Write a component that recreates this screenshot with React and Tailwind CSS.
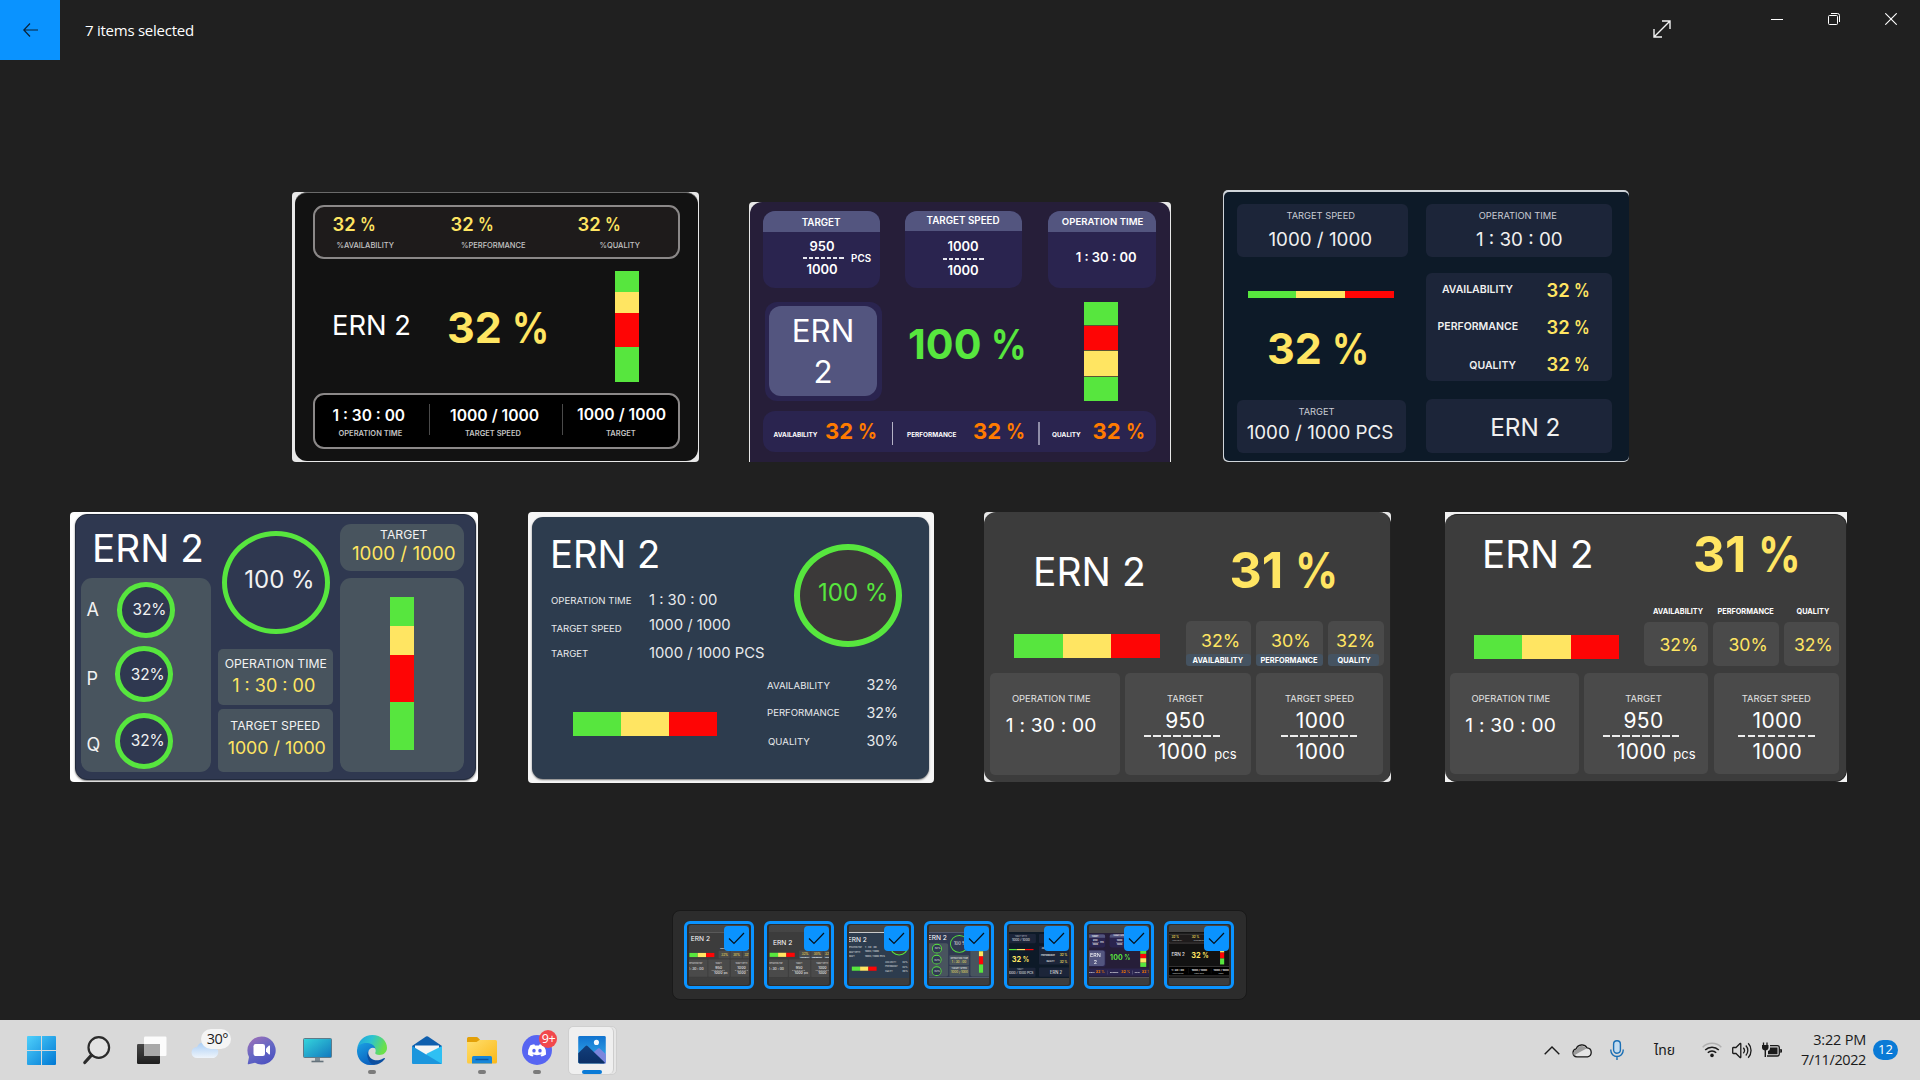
import React from "react";

/* ---------- shared pieces ---------- */

function Bar({ vertical, segments, className }) {
  return (
    <div className={(vertical ? "flex flex-col " : "flex ") + "shrink-0 " + className}>
      {segments.map((s, i) => (
        <div key={i} className={s} />
      ))}
    </div>
  );
}

const GYR = ["flex-1 bg-[#57e63e]", "flex-1 bg-[#ffe562]", "flex-1 bg-[#fe0505]"];

function Dashes({ count, className, dash }) {
  return (
    <div className={"flex justify-between " + className}>
      {Array.from({ length: count }, (_, i) => (
        <span key={i} className={dash} />
      ))}
    </div>
  );
}

/* Bold reading with a slightly condensed percent sign */
function Pct({ value }) {
  return (
    <>
      {value} <span className="inline-block origin-left scale-x-[0.85]">%</span>
    </>
  );
}

/* ---------- dashboards ---------- */

function BlackCard() {
  const top = [
    ["32", "%AVAILABILITY", "w-[118px]", "pl-[4px] leading-[14px]"],
    ["32", "%PERFORMANCE", "w-[127px]", "pl-[10.5px] leading-[13px]"],
    ["32", "%QUALITY", "", "pl-[22px] leading-[13px]"],
  ];
  return (
    <div className="h-[270px] w-[407px] shrink-0 rounded-[4px] bg-[#e8e8e8] pb-px pl-[2.5px] pr-px font-[Inter] whitespace-nowrap text-white">
      <div className="flex h-full flex-col rounded-[12px] border-t border-[#6a6a6a] bg-[#121212] pl-[18.5px] pt-[12px]">
        <div className="flex h-[54px] w-[367px] rounded-[11px] border-2 border-[#8b8888] bg-[#1e1b1b] pl-[17.5px] pt-[3px]">
          {top.map(([v, l, w, lc], i) => (
            <div key={i} className={w}>
              <p className="text-[18.4px] font-semibold leading-[28px] text-[#ffe562]"><Pct value={v} /></p>
              <p className={"pt-px text-[7.5px] font-medium text-[#c4c4c4] " + lc}>{l}</p>
            </div>
          ))}
        </div>
        <div className="flex h-[133.5px] w-[367px] items-center pl-[19px] pt-[2px]">
          <p className="w-[115px] text-[27.3px] font-normal">ERN 2</p>
          <p className="w-[167.5px] text-[43px] font-bold text-[#ffe562]"><Pct value="32" /></p>
          <Bar
            vertical
            className="w-[24.5px]"
            segments={["h-[21px] bg-[#57e63e]", "h-[21px] bg-[#ffe562]", "h-[34px] bg-[#fe0505]", "h-[35px] bg-[#57e63e]"]}
          />
        </div>
        <div className="flex h-[56px] w-[367px] rounded-[11px] border-2 border-[#8b8888] bg-black pl-[17.5px] pt-[9.5px]">
          <div className="w-[96px] text-[15.5px] font-semibold leading-[23px]">
            <p>1 : 30 : 00</p>
            <p className="pl-[6px] text-[7.5px] font-semibold leading-[13px] text-[#c4c4c4]">OPERATION TIME</p>
          </div>
          <div className="h-[31px] w-px bg-[#4a4a4a]" />
          <div className="w-[132px] pl-[20.5px] text-[15.7px] font-semibold leading-[23px]">
            <p>1000 / 1000</p>
            <p className="pl-[15px] text-[7.5px] font-semibold leading-[13px] text-[#c4c4c4]">TARGET SPEED</p>
          </div>
          <div className="h-[31px] w-px bg-[#4a4a4a]" />
          <div className="pl-[14.5px] text-[15.7px] font-semibold leading-[22px]">
            <p>1000 / 1000</p>
            <p className="pl-[29px] text-[7.5px] font-semibold leading-[16px] text-[#c4c4c4]">TARGET</p>
          </div>
        </div>
      </div>
    </div>
  );
}

function PurpleCard() {
  return (
    <div className="h-[260px] w-[422px] shrink-0 rounded-t-[4px] bg-[#e8e8e8] pl-px pr-[1.5px] font-[Inter] whitespace-nowrap text-white">
      <div className="flex h-full flex-col rounded-t-[12px] bg-[#261e39] pl-[12.6px] pt-[8.5px]">
        <div className="flex text-[13px] font-semibold">
          <div className="mr-[25px] h-[77px] w-[117px] overflow-hidden rounded-[12px] bg-[#2a244f] text-center">
            <p className="h-[21px] bg-[#53557f] text-[9.8px] leading-[23px]">TARGET</p>
            <div className="flex items-center pt-[3px]">
              <div className="ml-[40px] w-[41px]">
                <p className="-ml-[2px] leading-[22px]">950</p>
                <Dashes count={7} className="w-[41px]" dash="h-[2px] w-[4.4px] bg-[#e6e6ee]" />
                <p className="-ml-[2px] leading-[21px]">1000</p>
              </div>
              <p className="ml-[7.5px] pt-[4px] text-[9.8px]">PCS</p>
            </div>
          </div>
          <div className="mr-[26px] h-[77px] w-[117px] overflow-hidden rounded-[12px] bg-[#2a244f] text-center">
            <p className="h-[20.5px] bg-[#53557f] text-[9.8px] leading-[20.5px]">TARGET SPEED</p>
            <div className="flex flex-col items-center pt-[4px]">
              <p className="leading-[23px]">1000</p>
              <Dashes count={7} className="w-[41px]" dash="h-[2px] w-[4.4px] bg-[#e6e6ee]" />
              <p className="leading-[21px]">1000</p>
            </div>
          </div>
          <div className="h-[77px] w-[108px] overflow-hidden rounded-[12px] bg-[#2a244f] text-center">
            <p className="h-[21px] bg-[#53557f] pl-[2px] text-[9.6px] leading-[21.5px]">OPERATION TIME</p>
            <p className="pl-[9px] leading-[51px]">1 : 30 : 00</p>
          </div>
        </div>
        <div className="mt-[14px] flex h-[99px] pl-[2px]">
          <div className="h-[99px] w-[117px] rounded-[12px] bg-[#2a244f] p-[4.2px]">
            <div className="h-full rounded-[12px] bg-[#53557f] pt-[5px] text-center text-[31.3px] font-normal leading-[41.5px]">
              <p>ERN</p>
              <p>2</p>
            </div>
          </div>
          <p className="w-[202.5px] pl-[26.5px] text-[41.2px] font-bold leading-[85px] text-[#57e63e]"><Pct value="100" /></p>
          <Bar
            vertical
            className="w-[33.5px] gap-[1px] bg-[#5d5432]"
            segments={["h-[23px] bg-[#57e63e]", "h-[24.5px] bg-[#fe0505]", "h-[24.5px] bg-[#ffe562]", "h-[24px] bg-[#57e63e]"]}
          />
        </div>
        <div className="mt-[10px] flex h-[41px] w-[393px] rounded-[12px] bg-[#2a244f] pl-[11px] font-bold">
          <p className="w-[51.5px] text-[6.4px] leading-[49px]">AVAILABILITY</p>
          <p className="w-[67px] text-[22px] leading-[40px] text-[#ff7b00]"><Pct value="32" /></p>
          <div className="mt-[11px] h-[23px] w-px bg-[#b5b3c6]" />
          <p className="w-[80px] pl-[14px] text-[6.4px] leading-[49px]">PERFORMANCE</p>
          <p className="w-[65px] text-[22px] leading-[40px] text-[#ff7b00]"><Pct value="32" /></p>
          <div className="mt-[11px] h-[23px] w-[1.5px] bg-[#8f8da8]" />
          <p className="w-[53px] pl-[12.5px] text-[6.4px] leading-[49px]">QUALITY</p>
          <p className="text-[22px] leading-[40px] text-[#ff7b00]"><Pct value="32" /></p>
        </div>
      </div>
    </div>
  );
}

function NavyCard() {
  const tile = "rounded-[6px] bg-[#1c2539] text-center";
  return (
    <div className="h-[272px] w-[406px] shrink-0 rounded-[5px] bg-[#d0d5da] pb-px pl-[0.5px] pt-[1.5px] font-[Inter] whitespace-nowrap text-[#f0f0f0]">
      <div className="flex h-full rounded-[5px] bg-[#0d1a28] pl-[13.5px] pt-[12.5px]">
        <div className="mr-[18.5px] flex w-[170.5px] flex-col">
          <div className={"h-[53px] pt-[4px] " + tile}>
            <p className="pr-[3px] text-[9.3px] leading-[16px] text-[#c9ccd3]">TARGET SPEED</p>
            <p className="pr-[4px] text-[18.8px] font-normal leading-[32px]">1000 / 1000</p>
          </div>
          <Bar className="ml-[10.5px] mt-[33.5px] h-[7.5px] w-[146px]" segments={GYR} />
          <p className="pl-[30px] text-[43px] font-bold leading-[101.5px] text-[#ffe562]"><Pct value="32" /></p>
          <div className={"h-[53px] w-[169px] pt-[4px] " + tile}>
            <p className="pr-[10px] text-[9.3px] leading-[16px] text-[#c9ccd3]">TARGET</p>
            <p className="pr-[3px] text-[18.8px] font-normal leading-[25px]">1000 / 1000 PCS</p>
          </div>
        </div>
        <div className="flex w-[185.5px] flex-col">
          <div className={"h-[53px] pt-[4px] " + tile}>
            <p className="pr-[2px] text-[9.3px] leading-[16px] text-[#c9ccd3]">OPERATION TIME</p>
            <p className="pl-[1px] text-[18.8px] font-normal leading-[31px]">1 : 30 : 00</p>
          </div>
          <div className="mt-[16px] flex h-[107.5px] rounded-[6px] bg-[#1c2539]">
            <div className="w-[92px] text-right text-[10.5px] font-semibold">
              <p className="pr-[5px] leading-[33px]">AVAILABILITY</p>
              <p className="leading-[42px]">PERFORMANCE</p>
              <p className="pr-[2px] leading-[36px]">QUALITY</p>
            </div>
            <div className="-mt-px pl-[28.5px] text-[18.4px] font-semibold leading-[37px] text-[#ffe562]">
              <p><Pct value="32" /></p>
              <p><Pct value="32" /></p>
              <p><Pct value="32" /></p>
            </div>
          </div>
          <div className={"mt-[18.5px] h-[53.5px] pl-[13px] text-[24.3px] font-normal leading-[57px] " + tile}>ERN 2</div>
        </div>
      </div>
    </div>
  );
}

function SlateCard() {
  const panel = "rounded-[11px] bg-[#48545e]";
  const rings = [
    ["A", "", "w-[30px]", "pl-[7.5px] leading-[46px]", "leading-[55px]"],
    ["P", "mt-[8px]", "w-[28.5px]", "pl-[7px] leading-[48px]", "leading-[66px]"],
    ["Q", "mt-[10.5px]", "w-[28.5px]", "pl-[7px] leading-[45px]", "leading-[63px]"],
  ];
  return (
    <div className="h-[270px] w-[408px] shrink-0 rounded-[4px] bg-white pl-[5px] pt-[1.5px] font-[Inter] whitespace-nowrap text-[#f2f2f2]">
      <div className="flex h-[266px] w-[400.5px] rounded-[12px] border border-[#222a3c] bg-[#2f3850] pl-[5px] shadow-[0_1px_2px_#777]">
        <div className="w-[136.5px]">
          <p className="h-[63.5px] pl-[11px] text-[38.7px] font-normal leading-[66px] text-white">ERN 2</p>
          <div className={"h-[193.5px] w-[130px] pt-[4px] " + panel}>
            {rings.map(([l, mt, w, tc, lc], i) => (
              <div key={i} className={"flex h-[56px] pl-[5.5px] text-[18px] font-normal " + mt}>
                <span className={w + " " + lc}>{l}</span>
                <div className="h-[56px] w-[58.3px] rounded-[50%] border-[5px] border-[#57e63e] bg-[#2f3850]">
                  <p className={"text-center text-[15.4px] " + tc}>32%</p>
                </div>
              </div>
            ))}
          </div>
        </div>
        <div className="mr-[7px] w-[115.5px] pt-[16px] text-center">
          <div className="ml-[4px] h-[103.5px] w-[108px] rounded-[50%] border-[5px] border-[#57e63e] pl-[8px] text-[24px] font-normal leading-[88px]">
            100 %
          </div>
          <div className="mt-[15px] h-[56px] rounded-[5px] bg-[#48545e] pt-[4px]">
            <p className="pl-[1px] text-[12.2px] font-normal leading-[21px]">OPERATION TIME</p>
            <p className="pr-[3px] text-[18px] font-normal leading-[23px] text-[#ffe562]">1 : 30 : 00</p>
          </div>
          <div className="mt-[4px] h-[63px] rounded-[5px] bg-[#48545e] pt-[6px]">
            <p className="text-[12.2px] font-normal leading-[21px]">TARGET SPEED</p>
            <p className="pl-[3px] text-[17.8px] font-normal leading-[23px] text-[#ffe562]">1000 / 1000</p>
          </div>
        </div>
        <div className="w-[123.5px] pt-[9.5px]">
          <div className={"h-[46.5px] pl-[4px] pt-[2px] text-center " + panel}>
            <p className="text-[12.2px] font-normal leading-[18px]">TARGET</p>
            <p className="text-[18.8px] font-normal leading-[19px] text-[#ffe562]">1000 / 1000</p>
          </div>
          <div className={"mt-[7.5px] flex h-[193.5px] items-start pl-[50px] pt-[19px] " + panel}>
            <Bar
              vertical
              className="w-[24px]"
              segments={["h-[29px] bg-[#57e63e]", "h-[29px] bg-[#ffe562]", "h-[47.3px] bg-[#fe0505]", "h-[48px] bg-[#57e63e]"]}
            />
          </div>
        </div>
      </div>
    </div>
  );
}

function BlueCard() {
  return (
    <div className="h-[271px] w-[406px] shrink-0 rounded-[4px] bg-[#f6f6f6] pl-[3.5px] pt-[5px] font-[Inter] whitespace-nowrap text-[#e8eaec]">
      <div className="flex h-[262px] w-[397.5px] flex-col rounded-[11px] bg-[#2d3c4e] pl-[19.5px] shadow-[0_1px_2px_#777]">
        <div className="flex h-[153px]">
          <div className="w-[243px]">
            <p className="-ml-px h-[74px] text-[38.2px] font-normal leading-[75.5px] text-white">ERN 2</p>
            <div className="grid grid-cols-[98px_1fr] items-start text-[14.8px] font-normal">
              <p className="text-[9.6px] leading-[19px]">OPERATION TIME</p>
              <p className="leading-[19px]">1 : 30 : 00</p>
              <p className="h-[31px] text-[9.6px] leading-[37px]">TARGET SPEED</p>
              <p className="leading-[31px]">1000 / 1000</p>
              <p className="text-[9.6px] leading-[25px]">TARGET</p>
              <p className="leading-[25px]">1000 / 1000 PCS</p>
            </div>
          </div>
          <div className="mt-[27px] h-[102.5px] w-[107.5px] rounded-[50%] border-[6px] border-[#57e63e] bg-[#3b3939] pl-[18px] text-[24px] font-normal leading-[86px] text-[#57e63e]">
            100 %
          </div>
        </div>
        <div className="flex">
          <Bar className="ml-[22px] mt-[42px] h-[24px] w-[144px]" segments={GYR} />
          <div className="ml-[50px] grid grid-cols-[99.5px_1fr] items-start text-[14.3px] font-normal">
            <p className="text-[9.6px] leading-[31px]">AVAILABILITY</p>
            <p className="leading-[30px]">32%</p>
            <p className="text-[9.6px] leading-[23px]">PERFORMANCE</p>
            <p className="leading-[24px]">32%</p>
            <p className="pl-px text-[9.6px] leading-[33px]">QUALITY</p>
            <p className="leading-[32px]">30%</p>
          </div>
        </div>
      </div>
    </div>
  );
}

/* Lower row shared by the two graphite dashboards */
function GraphiteFooter({ cols, height }) {
  const tile = "rounded-[5px] bg-[#4a4a4a] pt-[17px] " + height;
  const label = "text-[9.4px] font-normal leading-[17px] tracking-normal text-[#e2e2e2]";
  return (
    <div className={"grid text-[21px] font-normal tracking-[0.25px] " + cols}>
      <div className={tile}>
        <p className={"pr-[7px] text-center " + label}>OPERATION TIME</p>
        <p className="pr-[7px] text-center text-[19.2px] leading-[37px] tracking-[0.2px]">1 : 30 : 00</p>
      </div>
      <div className={tile}>
        <div className="w-full pr-[5px] text-center">
          <p className={label}>TARGET</p>
          <p className="leading-[28.5px]">950</p>
        </div>
        <Dashes count={8} className="ml-[18.5px] w-[77px]" dash="h-[2px] w-[7.2px] bg-[#ececec]" />
        <p className="pl-[33px] leading-[30.5px]">
          1000<span className="pl-[7px] text-[13px] tracking-normal">pcs</span>
        </p>
      </div>
      <div className={tile}>
        <p className={"text-center " + label}>TARGET SPEED</p>
        <p className="pl-[2px] text-center leading-[28.5px]">1000</p>
        <Dashes count={8} className="ml-[24.5px] w-[77px]" dash="h-[2px] w-[7.2px] bg-[#ececec]" />
        <p className="pl-[2px] text-center leading-[30.5px]">1000</p>
      </div>
    </div>
  );
}

function GraphiteTagCard() {
  const tags = [
    ["32%", "AVAILABILITY", "w-[65px]", "w-full", "pl-[7px]"],
    ["30%", "PERFORMANCE", "w-[67px]", "w-full", "pl-[5px]"],
    ["32%", "QUALITY", "w-[56px]", "w-[51px]", "pl-[10px]"],
  ];
  return (
    <div className="h-[270px] w-[407px] shrink-0 rounded-[4px] bg-[#e8e8e8] pr-[0.5px] font-[Inter] whitespace-nowrap text-white">
      <div className="flex h-full flex-col rounded-[12px] border-r border-[#222] bg-[#3c3c3c] pl-[6px]">
        <div className="flex h-[109px] leading-[120px]">
          <p className="w-[239.5px] pl-[43px] text-[39px] font-normal">ERN 2</p>
          <p className="text-[50px] font-bold leading-[117px] text-[#ffe562]"><Pct value="31" /></p>
        </div>
        <div className="flex h-[51.5px]">
          <Bar className="ml-[24px] mr-[25.5px] mt-[13px] h-[24px] w-[146px]" segments={GYR} />
          {tags.map(([v, l, w, lw, pl], i) => (
            <div key={i} className={"mr-[5px] flex h-[44.5px] flex-col justify-between rounded-[5px] bg-[#4a4a4a] " + w}>
              <p className={"h-[33px] text-[17.8px] font-normal leading-[39.5px] text-[#ffe562] " + (i === 2 ? "pl-[8.5px]" : "pl-[15.5px]")}>{v}</p>
              <p className={"h-[11.5px] shrink-0 rounded-[3px] bg-[#455361] text-[7.4px] font-bold leading-[13px] " + lw + " " + pl}>{l}</p>
            </div>
          ))}
        </div>
        <GraphiteFooter height="h-[102px]" cols="grid-cols-[129.5px_125.5px_127px] gap-x-[5.5px]" />
      </div>
    </div>
  );
}

function GraphiteCard() {
  const tags = [
    ["32%", "AVAILABILITY", "w-[64px]", "pl-[9px]", "pl-[15.5px]"],
    ["30%", "PERFORMANCE", "w-[66px]", "pl-[4.5px]", "pl-[15.5px]"],
    ["32%", "QUALITY", "w-[55px]", "pl-[12.5px]", "pl-[10px]"],
  ];
  return (
    <div className="h-[270px] w-[402px] shrink-0 bg-[#f2f2f2] pb-[0.5px] pr-[0.5px] pt-[2px] font-[Inter] whitespace-nowrap text-white">
      <div className="flex h-full flex-col rounded-[12px] border border-l-0 border-[#222] bg-[#3c3c3c] pl-[5px]">
        <div className="flex h-[88px] leading-[78.5px]">
          <p className="w-[243px] pl-[32px] text-[38.6px] font-normal">ERN 2</p>
          <p className="text-[49.5px] font-bold text-[#ffe562]"><Pct value="31" /></p>
        </div>
        <div className="flex h-[69.5px]">
          <Bar className="ml-[24px] mr-[25px] mt-[32px] h-[24px] w-[145px]" segments={GYR} />
          {tags.map(([v, l, w, lp, vp], i) => (
            <div key={i} className={"mr-[5px] " + w}>
              <p className={"h-[19px] text-[7.3px] font-bold leading-[17px] " + lp}>{l}</p>
              <p className={"h-[44px] rounded-[5px] bg-[#4a4a4a] text-[17.6px] font-normal leading-[46px] text-[#ffe562] " + vp}>{v}</p>
            </div>
          ))}
        </div>
        <GraphiteFooter height="h-[101px]" cols="grid-cols-[128.5px_124px_125.5px] gap-x-[5.5px]" />
      </div>
    </div>
  );
}

/* ---------- filmstrip ---------- */

function Thumb({ children }) {
  return (
    <div className="relative flex h-[68px] w-[70px] items-center justify-center rounded-[6px] border-[3px] border-[#0a93ff] bg-[#2e2e2e]">
      <div className="flex h-[60px] w-[60px] items-center justify-center overflow-hidden rounded-[2px] bg-gradient-to-b from-[#464646] to-[#3c3c3c]">
        <div className="flex h-[46.5px] w-[60px] shrink-0 items-center justify-center overflow-hidden">
          <div className="shrink-0 scale-[0.172]">{children}</div>
        </div>
      </div>
      <div className="absolute right-[2px] top-[2px] flex h-[25px] w-[25px] items-center justify-center rounded-[4px] bg-[#0a93ff]">
        <svg width="17" height="13" viewBox="0 0 17 13" fill="none" stroke="#06121e" strokeWidth="1.2">
          <path d="M1 6.5 L6 11.5 L16 1" />
        </svg>
      </div>
    </div>
  );
}

/* ---------- taskbar icons ---------- */

const Windows = () => (
  <svg width="29" height="29" viewBox="0 0 29 29">
    <defs>
      <linearGradient id="win" x1="0" y1="0" x2="1" y2="1">
        <stop offset="0" stopColor="#4fd0fb" />
        <stop offset="1" stopColor="#0078d4" />
      </linearGradient>
    </defs>
    <path fill="url(#win)" d="M1 0H14V14H0V1Q0 0 1 0ZM15 0H28Q29 0 29 1V14H15ZM0 15H14V29H1Q0 29 0 28ZM15 15H29V28Q29 29 28 29H15Z" />
  </svg>
);

const Search = () => (
  <svg width="29" height="29" viewBox="0 0 29 29" fill="none">
    <circle cx="16.8" cy="11.5" r="10.3" stroke="#2b2b2b" strokeWidth="2.2" fill="#e3e3e3" />
    <path d="M9.5 19.2 L2.8 26.5" stroke="#2b2b2b" strokeWidth="3.2" strokeLinecap="round" />
  </svg>
);

const TaskView = () => (
  <svg width="30" height="29" viewBox="0 0 30 29">
    <defs>
      <linearGradient id="tvd" x1="0" y1="0" x2="0" y2="1">
        <stop offset="0" stopColor="#474747" />
        <stop offset="1" stopColor="#1f1f1f" />
      </linearGradient>
    </defs>
    <rect x="0" y="8" width="23" height="20" rx="1.2" fill="url(#tvd)" />
    <rect x="7" y="0.5" width="22.5" height="19.5" rx="1.2" fill="#ffffff" fillOpacity="0.9" />
    <rect x="7" y="8" width="16" height="12" fill="#a9a9a9" />
  </svg>
);

const Weather = () => (
  <div className="relative h-[30px] w-[40px] pt-[5px]">
    <svg width="30" height="20" viewBox="0 0 30 20">
      <defs>
        <linearGradient id="cld" x1="0" y1="0" x2="0" y2="1">
          <stop offset="0" stopColor="#a9cdf5" />
          <stop offset="1" stopColor="#eef4fb" />
        </linearGradient>
      </defs>
      <path fill="#f6d9b8" d="M20 3a6 6 0 0 1 8 7h-6z" />
      <path fill="url(#cld)" d="M6 18a5.5 5.5 0 0 1 0-11A8 8 0 0 1 20 6a6.2 6.2 0 0 1 3 12Z" />
    </svg>
    <div className="absolute left-[10px] top-[-6px] flex h-[20px] w-[30px] items-center justify-center rounded-[10px] bg-[#f5f5f5] pl-[3px] font-['Open_Sans'] text-[14.5px] leading-none tracking-[-0.5px] text-[#1b1b1b]">
      30°
    </div>
  </div>
);

const Chat = () => (
  <svg width="29" height="29" viewBox="0 0 29 29">
    <defs>
      <linearGradient id="cht" x1="0.2" y1="0" x2="0.8" y2="1">
        <stop offset="0" stopColor="#9a6fb8" />
        <stop offset="0.5" stopColor="#6467c4" />
        <stop offset="1" stopColor="#4a4fc0" />
      </linearGradient>
    </defs>
    <path fill="url(#cht)" d="M14.5 0.5A14 14 0 1 1 8 26.8L1.5 28.2Q0.6 28.3 0.8 27.3L2 21A14 14 0 0 1 14.5 0.5Z" />
    <rect x="6.5" y="8" width="11.5" height="12" rx="2.2" fill="#fff" />
    <path fill="#fff" d="M19 12.5 L22 9.6Q23 9 23 10.2V17.8Q23 19 22 18.4L19 15.6Z" />
  </svg>
);

const Monitor = () => (
  <svg width="29" height="25" viewBox="0 0 29 25">
    <defs>
      <linearGradient id="mon" x1="0" y1="0" x2="1" y2="1">
        <stop offset="0" stopColor="#35d6dc" />
        <stop offset="1" stopColor="#1277be" />
      </linearGradient>
    </defs>
    <rect x="0.5" y="0.5" width="28" height="19" rx="1" fill="url(#mon)" stroke="#5f7a88" />
    <path fill="#7f8c95" d="M12 20h5v3h-5z" />
    <path fill="#65727b" d="M8.5 22.7h12v1.6h-12z" />
  </svg>
);

const Edge = () => (
  <svg width="30" height="30" viewBox="0 0 30 30">
    <defs>
      <linearGradient id="edA" x1="0" y1="0" x2="1" y2="0.3">
        <stop offset="0" stopColor="#1e9fe0" />
        <stop offset="0.5" stopColor="#2cc3d0" />
        <stop offset="1" stopColor="#6be04b" />
      </linearGradient>
      <linearGradient id="edB" x1="0" y1="0" x2="0.5" y2="1">
        <stop offset="0" stopColor="#1ba1e3" />
        <stop offset="1" stopColor="#0b62c0" />
      </linearGradient>
    </defs>
    <path fill="url(#edA)" d="M0.2 14C1 6 7 0 15.5 0 24 0 30 6 30 12.8 30 17.4 26.6 20 22.6 20 19.5 20 17.8 19 18.2 17.8 19.5 16.4 18.8 10 12 9.4 6.5 9 1 11 0.2 14Z" />
    <path fill="url(#edB)" d="M0 15C0.6 10 5 7.6 10.5 8 15 8.4 18 11 18.4 13.5 16 11.5 11.5 13 11 18 10.6 23.5 15 28.5 19 29.3 8 32.5 -0.5 25 0 15Z" />
    <path fill="#0c4fa0" d="M11.2 16C10.6 23 17 26.5 22.5 25 25 24.3 26.6 23.2 27.5 23 28.2 23 28 23.8 27.6 24.3 25 28 20.5 30 16.5 29.8 11.5 28 8.8 21 11.2 16Z" />
  </svg>
);

const Mail = () => (
  <svg width="30" height="28" viewBox="0 0 30 28">
    <path fill="#0f5fae" d="M0 10 L14 0.6Q15 0 16 0.6L30 10V12H0Z" />
    <path fill="#f5f5f5" d="M3 9.5H27V14L15 20 3 14Z" />
    <path fill="#2fc0f3" d="M30 10V27Q30 28 29 28H8L15 17.5Z" />
    <path fill="#1c96dd" d="M0 10 L30 28H1Q0 28 0 27Z" />
  </svg>
);

const Explorer = () => (
  <svg width="30" height="27" viewBox="0 0 30 27">
    <defs>
      <linearGradient id="fld" x1="0" y1="0" x2="1" y2="1">
        <stop offset="0" stopColor="#ffdf6e" />
        <stop offset="1" stopColor="#fbb818" />
      </linearGradient>
    </defs>
    <path fill="#e3a008" d="M0 1.5Q0 0 1.5 0H9.5Q10.5 0 11.3 0.9L14 4H28.5V12H0Z" />
    <path fill="url(#fld)" d="M0 5H9.5L12.5 3H28.5Q30 3 30 4.5V25Q30 26.5 28.5 26.5H1.5Q0 26.5 0 25Z" />
    <path fill="#1786d8" d="M5 26.5V20.5Q5 19 6.5 19H23.5Q25 19 25 20.5V26.5Z" />
    <path fill="#0c56a0" d="M8.5 21.8h13v1.4h-13z" />
  </svg>
);

const Discord = () => (
  <div className="relative h-[30px] w-[30px]">
    <svg width="30" height="30" viewBox="0 0 30 30">
      <circle cx="15" cy="15" r="15" fill="#5765f2" />
      <path
        fill="#fff"
        d="M12.3 9.2Q9.8 9.6 8.2 10.4 5.6 14.6 5.9 19.4 8 21 10.5 21.6L11.6 19.9Q10.7 19.6 9.9 19.1 15 21.3 20.1 19.1 19.3 19.6 18.4 19.9L19.5 21.6Q22 21 24.1 19.4 24.4 14.6 21.8 10.4 20.2 9.6 17.7 9.2L17 10.4H13Z"
      />
      <ellipse cx="12" cy="15.7" rx="1.7" ry="1.9" fill="#5765f2" />
      <ellipse cx="18" cy="15.7" rx="1.7" ry="1.9" fill="#5765f2" />
    </svg>
    <div className="absolute left-[17px] top-[-5px] flex h-[18px] w-[18px] items-center justify-center rounded-full bg-[#f2484c] font-['Open_Sans'] text-[12.5px] tracking-[-0.5px] text-white">
      9+
    </div>
  </div>
);

const Photos = () => (
  <svg width="28" height="28" viewBox="0 0 28 28">
    <defs>
      <linearGradient id="pho" x1="0" y1="0" x2="0" y2="1">
        <stop offset="0" stopColor="#1173cf" />
        <stop offset="1" stopColor="#39b0ee" />
      </linearGradient>
      <linearGradient id="pmt" x1="0" y1="0" x2="0" y2="1">
        <stop offset="0" stopColor="#123f7c" />
        <stop offset="1" stopColor="#0b2f66" />
      </linearGradient>
    </defs>
    <rect width="28" height="28" rx="1.5" fill="url(#pho)" />
    <path fill="#7b86dd" d="M15 17 L20 12.8Q21 12 22 12.8L28 18.5V28H22Z" />
    <path fill="url(#pmt)" d="M0 17.5 L7.5 10.2Q8.5 9.3 9.5 10.2L27 27Q27 28 26 28H1.5Q0 28 0 26.5Z" />
    <circle cx="18.5" cy="6.5" r="2.6" fill="#f6fafe" />
  </svg>
);

function Slot({ children, dot }) {
  return (
    <div className="flex w-[55.1px] flex-col items-center">
      <div className="flex h-[60px] items-center justify-center">{children}</div>
      {dot && <div className="-mt-[10px] h-[4px] w-[8px] shrink-0 rounded-[2px] bg-[#7b7b7b]" />}
    </div>
  );
}

function Taskbar() {
  return (
    <footer className="flex h-[60px] justify-between bg-[#d9d9d9] text-[#1b1b1b]">
      <div className="flex pl-[14px]">
        <Slot><Windows /></Slot>
        <Slot><Search /></Slot>
        <Slot><TaskView /></Slot>
        <Slot><div className="ml-[8px]"><Weather /></div></Slot>
        <Slot><Chat /></Slot>
        <Slot><Monitor /></Slot>
        <Slot dot><Edge /></Slot>
        <Slot><Mail /></Slot>
        <Slot dot><Explorer /></Slot>
        <Slot dot><Discord /></Slot>
        <div className="ml-[3px] mt-[6px] h-[48.5px] w-[49px] rounded-[5px] border border-[#cfcfcf] bg-[#e6e6e6]">
          <div className="flex h-full w-[45px] flex-col items-center rounded-[5px] border-r border-[#cdcdcd] bg-[#efefef] pl-[2px] pt-[9px]">
            <Photos />
            <div className="mt-[6px] h-[4px] w-[20px] rounded-[2px] bg-[#0a7ad6]" />
          </div>
        </div>
      </div>
      <div className="flex items-center pr-[22px]">
        <svg width="16" height="9" viewBox="0 0 16 9" fill="none" stroke="#1b1b1b" strokeWidth="1.4">
          <path d="M0.7 8.3 L8 1 L15.3 8.3" />
        </svg>
        <svg className="ml-[12px]" width="20" height="15" viewBox="0 0 20 15">
          <path d="M4.8 13.8a4 4 0 0 1-.6-7.9A6 6 0 0 1 15 4.9a4.5 4.5 0 0 1 .6 8.9Z" fill="#e6e6e6" stroke="#1b1b1b" strokeWidth="1.3" />
          <path d="M2 12.6a4 4 0 0 1 2.6-6A5.6 5.6 0 0 1 14.6 5.6L8 9Z" fill="#9b9b9b" />
        </svg>
        <svg className="ml-[18px]" width="14" height="20" viewBox="0 0 14 20" fill="none" stroke="#1a6fb5" strokeWidth="1.4">
          <rect x="3.6" y="0.8" width="6.8" height="12.4" rx="3.4" fill="#c3dcf0" />
          <path d="M0.8 9.5v0.8a6.2 6.2 0 0 0 12.4 0v-0.8M7 16.4V20" />
        </svg>
        <span className="ml-[30px] w-[22px] font-['Noto_Sans_Thai','Noto_Sans',sans-serif] text-[14px]">ไทย</span>
        <svg className="ml-[26px]" width="20" height="16" viewBox="0 0 20 16" fill="none" strokeWidth="1.5">
          <path d="M0.7 5.2a13 13 0 0 1 18.6 0" stroke="#b0b0b0" />
          <path d="M3.2 8a9.6 9.6 0 0 1 13.6 0M5.8 10.7a6 6 0 0 1 8.4 0" stroke="#1b1b1b" />
          <circle cx="10" cy="13.4" r="1.8" fill="#1b1b1b" />
        </svg>
        <svg className="ml-[10px]" width="20" height="17" viewBox="0 0 20 17" fill="none" stroke="#1b1b1b" strokeWidth="1.3">
          <path d="M0.7 6.2Q0.7 5.5 1.4 5.5H4L8 1.6Q8.8 1 8.8 2V15Q8.8 16 8 15.4L4 11.5H1.4Q0.7 11.5 0.7 10.8Z" />
          <path d="M11.3 5.8a4 4 0 0 1 0 5.4M13.8 3.5a7.2 7.2 0 0 1 0 10M16.2 1.3a10.5 10.5 0 0 1 0 14.4" />
        </svg>
        <svg className="ml-[10px]" width="20" height="16" viewBox="0 0 20 16">
          <path d="M1.5 0.5v3M5 0.5v3" stroke="#1b1b1b" strokeWidth="1.3" />
          <path d="M0 3h6.5v3q0 2-2.5 2.4V15h-1.4V8.4Q0 8 0 6Z" fill="#1b1b1b" />
          <path d="M8 3.6H15.3Q17.3 3.6 17.3 5.6V12Q17.3 14 15.3 14H5" fill="none" stroke="#1b1b1b" strokeWidth="1.3" />
          <path d="M8 5.5H15.5V12.2H6V9Q8 8.5 8 6.5ZM18.2 7H19Q20 7 20 8V9.8Q20 10.8 19 10.8H18.2Z" fill="#1b1b1b" />
        </svg>
        <div className="ml-[18px] w-[66px] text-right font-['Open_Sans'] text-[14.5px] leading-[20px] whitespace-nowrap">
          <p className="tracking-[-0.2px]">3:22 PM</p>
          <p className="tracking-[-0.4px]">7/11/2022</p>
        </div>
        <div className="ml-[7px] flex h-[20px] w-[25px] items-center justify-center rounded-[10px] bg-[#0a7ad6] font-['Open_Sans'] text-[13px] text-white">
          12
        </div>
      </div>
    </footer>
  );
}

/* ---------- page ---------- */

export default function App() {
  return (
    <div className="flex h-[1080px] w-[1920px] flex-col overflow-hidden bg-[#202020]">
      <header className="flex h-[60px] pr-px text-white">
        <button className="flex h-[60px] w-[60px] items-center justify-center bg-[#0a93ff]">
          <svg width="15" height="14" viewBox="0 0 15 14" fill="none" stroke="#0b2238" strokeWidth="1.2">
            <path d="M7 0.5 L0.8 7 L7 13.5M0.8 7H15" />
          </svg>
        </button>
        <p className="grow pl-[25px] font-['Open_Sans'] text-[15px] leading-[61px] tracking-[-0.25px]">7 items selected</p>
        <svg className="mt-[20px] mr-[77px]" width="18" height="18" viewBox="0 0 18 18" fill="none" stroke="#f2f2f2" strokeWidth="1.4">
          <path d="M1 17 L17 1M9 1H17V9M1 9V17H9" />
        </svg>
        <div className="flex h-[38px]">
          <div className="flex w-[57px] items-center justify-center">
            <div className="mt-px h-px w-[12px] bg-white" />
          </div>
          <div className="flex w-[57px] items-center justify-center">
            <svg width="12" height="12" viewBox="0 0 12 12" fill="none" stroke="#fff">
              <rect x="0.5" y="2.5" width="9" height="9" rx="1" />
              <path d="M3 0.5H9.5Q11.5 0.5 11.5 2.5V9" />
            </svg>
          </div>
          <div className="flex w-[57px] items-center justify-center">
            <svg width="12" height="12" viewBox="0 0 12 12" fill="none" stroke="#fff" strokeWidth="1.1">
              <path d="M0.3 0.3 L11.7 11.7M11.7 0.3 L0.3 11.7" />
            </svg>
          </div>
        </div>
      </header>

      <main className="flex grow flex-col">
        <div className="flex h-[402px] items-end gap-[50px] pl-[292px]">
          <BlackCard />
          <PurpleCard />
          <div className="ml-[2px]"><NavyCard /></div>
        </div>
        <div className="mt-[50px] flex h-[271px] items-start gap-[50px] pl-[70px]">
          <SlateCard />
          <BlueCard />
          <GraphiteTagCard />
          <div className="ml-[4px]"><GraphiteCard /></div>
        </div>
        <div className="ml-[672px] mt-[127px] flex h-[90px] w-[575px] items-start gap-[10px] rounded-[8px] border border-[#191919] bg-[#2c2c2c] pl-[11px] pt-[10px]">
          <Thumb><GraphiteCard /></Thumb>
          <Thumb><GraphiteTagCard /></Thumb>
          <Thumb><BlueCard /></Thumb>
          <Thumb><SlateCard /></Thumb>
          <Thumb><NavyCard /></Thumb>
          <Thumb><PurpleCard /></Thumb>
          <Thumb><BlackCard /></Thumb>
        </div>
      </main>

      <Taskbar />
    </div>
  );
}
